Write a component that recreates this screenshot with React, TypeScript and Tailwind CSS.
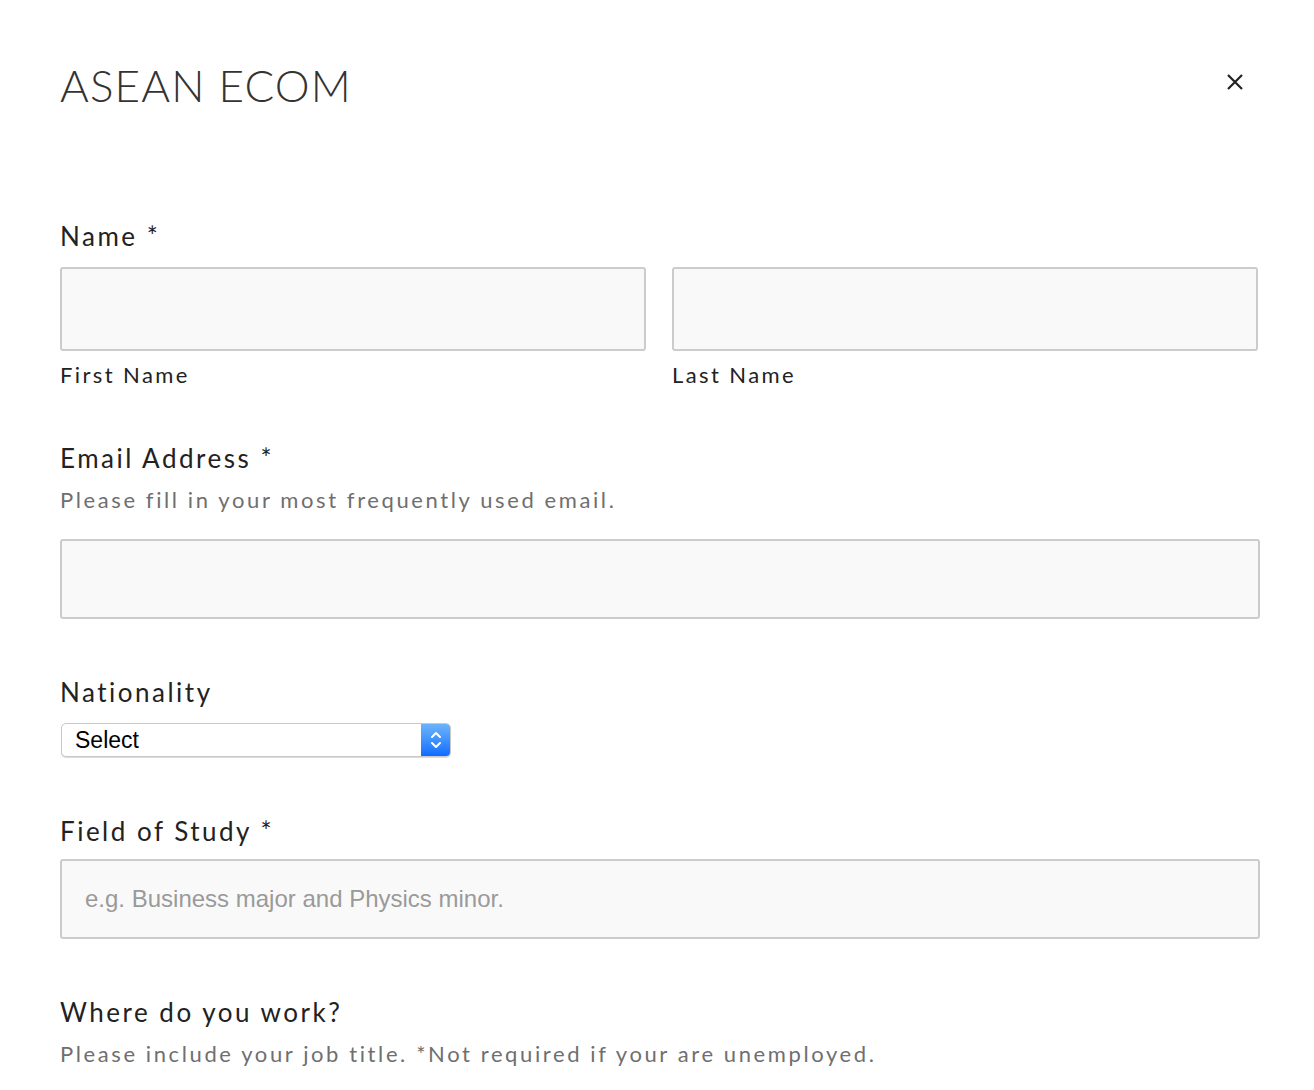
import React from "react";

function Label({ children }: { children: React.ReactNode }) {
  return (
    <div className="text-[26px] leading-none tracking-[2.5px] text-[#222]">
      {children}
    </div>
  );
}

function Helper({ children }: { children: React.ReactNode }) {
  return (
    <div className="mt-[18px] text-[22px] leading-none tracking-[2.6px] text-[#6f6f6f]">
      {children}
    </div>
  );
}

function TextBox({ h, placeholder }: { h: string; placeholder?: string }) {
  return (
    <div
      className={
        "w-full rounded-[3px] border-2 border-[#cccccc] bg-[#f9f9f9] flex items-center px-[23px] " +
        h
      }
    >
      {placeholder && (
        <span className="text-[24px] text-[#9a9a9a]" style={{ fontFamily: '"Liberation Sans", Arial, sans-serif' }}>
          {placeholder}
        </span>
      )}
    </div>
  );
}

export default function App() {
  return (
    <div className="min-h-[1090px] bg-white pl-[60px] pr-[54px] overflow-hidden" style={{ fontFamily: "Lato, 'Open Sans', sans-serif" }}>
      <div className="flex items-start justify-between pt-[63px]">
        <h1 className="text-[44px] leading-none tracking-[1.1px] text-[#333] font-light">ASEAN ECOM</h1>
        <button className="mt-[10px] mr-[16px] text-[#222]">
          <svg width="18" height="18" viewBox="0 0 18 18">
            <path d="M2 2 L16 16 M16 2 L2 16" stroke="currentColor" strokeWidth="2.2" />
          </svg>
        </button>
      </div>

      <div className="mt-[116px]">
        <Label>Name *</Label>
        <div className="mt-[18px] grid grid-cols-[586px_586px] gap-[26px]">
          <div>
            <TextBox h="h-[84px]" />
            <div className="mt-[13px] text-[22px] leading-none tracking-[2.4px] text-[#222]">First Name</div>
          </div>
          <div>
            <TextBox h="h-[84px]" />
            <div className="mt-[13px] text-[22px] leading-none tracking-[2.4px] text-[#222]">Last Name</div>
          </div>
        </div>
      </div>

      <div className="mt-[59px]">
        <Label>Email Address *</Label>
        <Helper>Please fill in your most frequently used email.</Helper>
        <div className="mt-[28px]">
          <TextBox h="h-[80px]" />
        </div>
      </div>

      <div className="mt-[60px]">
        <Label>Nationality</Label>
        <div className="mt-[18px] flex h-[34px] w-[390px] ml-[1px] overflow-hidden rounded-[5px] border border-[#c8c8c8] bg-white shadow-[0_1px_1px_rgba(0,0,0,0.15)]">
          <span className="flex-1 pl-[13px] text-[23px] leading-[32px] text-black" style={{ fontFamily: '"Liberation Sans", Arial, sans-serif' }}>
            Select
          </span>
          <span className="flex w-[29px] items-center justify-center bg-gradient-to-b from-[#6cb3fa] to-[#0a6cff]">
            <svg width="14" height="22" viewBox="0 0 14 22">
              <path d="M3 8 L7 4 L11 8 M3 14 L7 18 L11 14" stroke="white" strokeWidth="2" fill="none" strokeLinecap="round" strokeLinejoin="round" />
            </svg>
          </span>
        </div>
      </div>

      <div className="mt-[61px]">
        <Label>Field of Study *</Label>
        <div className="mt-[15px]">
          <TextBox h="h-[80px]" placeholder="e.g. Business major and Physics minor." />
        </div>
      </div>

      <div className="mt-[60px]">
        <Label>Where do you work?</Label>
        <Helper>Please include your job title. *Not required if your are unemployed.</Helper>
      </div>
    </div>
  );
}
